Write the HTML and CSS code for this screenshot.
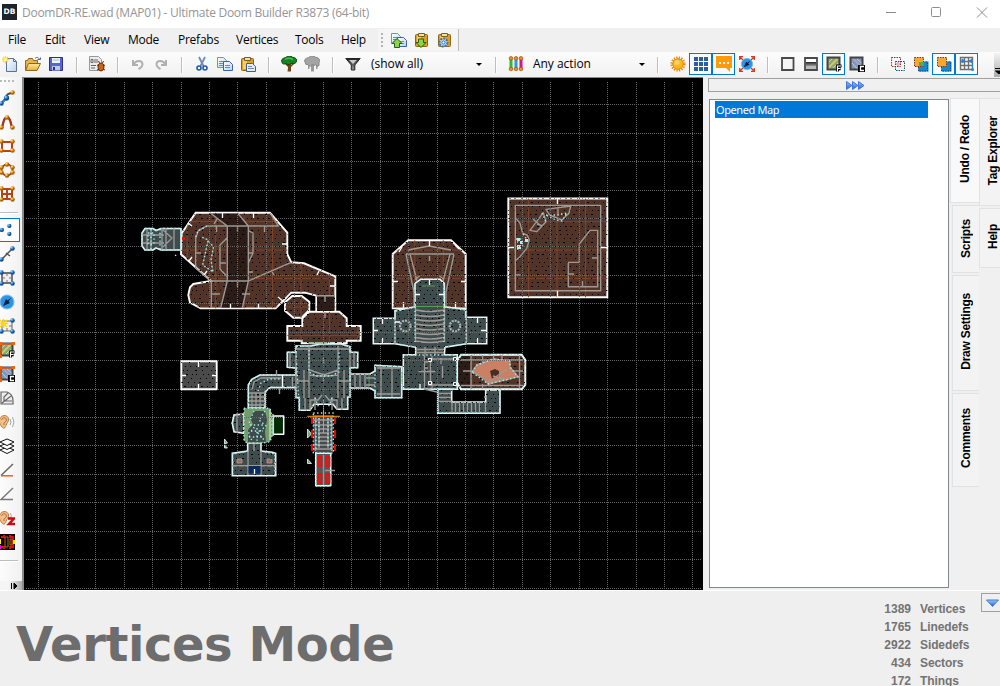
FILE: index.html
```html
<!DOCTYPE html>
<html lang="en">
<head>
<meta charset="utf-8">
<title>Ultimate Doom Builder</title>
<link rel="stylesheet" href="styles.css">
</head>
<body>
<svg class="defs" width="0" height="0">
  <defs>
    <radialGradient id="gOrange" cx=".35" cy=".3"><stop offset="0" stop-color="#ffe9a0"/><stop offset=".5" stop-color="#f59c1a"/><stop offset="1" stop-color="#a85a00"/></radialGradient>
    <radialGradient id="gBlue" cx=".35" cy=".3"><stop offset="0" stop-color="#b5dcff"/><stop offset=".5" stop-color="#3a8ad8"/><stop offset="1" stop-color="#0d4a90"/></radialGradient>
    <linearGradient id="gFold" x2="0" y2="1"><stop offset="0" stop-color="#ffe9a0"/><stop offset="1" stop-color="#e6ae35"/></linearGradient>
    <linearGradient id="gPage" x2="1" y2="1"><stop offset="0" stop-color="#fff"/><stop offset="1" stop-color="#b9d3ee"/></linearGradient>
    <linearGradient id="gArrow" x2="0" y2="1"><stop offset="0" stop-color="#9dc8f8"/><stop offset="1" stop-color="#1f5fc8"/></linearGradient>
    <linearGradient id="gDark" x2="0" y2="1"><stop offset="0" stop-color="#222"/><stop offset="1" stop-color="#999"/></linearGradient>
    <symbol id="ob" viewBox="0 0 6 6"><circle cx="3" cy="3" r="2.700" fill="url(#gOrange)"/></symbol>
    <symbol id="bb" viewBox="0 0 6 6"><circle cx="3" cy="3" r="2.700" fill="url(#gBlue)"/></symbol>
    <symbol id="clip" viewBox="0 0 16 16"><rect x="1.500" y="2.500" width="12" height="12" rx="1" fill="#d9a02c" stroke="#8e6414"/><path d="M3 4h4v9H3z" fill="#f3cd6c"/><path d="M4.500 1.500h6v3h-6z" fill="#f1dfa8" stroke="#79601f"/></symbol>
    <symbol id="pages" viewBox="0 0 16 16"><path d="M.5 1.500h6l3 3v7h-9z" fill="url(#gPage)" stroke="#6f91bd"/><path d="M2 5.500h5M2 7.500h5M2 9.500h4" stroke="#5b8fd0"/><path d="M6.500 5.500h6l3 3v6h-9z" fill="url(#gPage)" stroke="#3c64a4"/><path d="M8 9.500h5M8 11.500h5" stroke="#5b8fd0"/></symbol>
    <symbol id="tex" viewBox="0 0 16 16"><path d="M1.500 1.500h12v12h-12z" fill="#90a66c" stroke="#444" stroke-width="2"/><path d="M3 10l7-7h2.500L3 12.500z" fill="#d7c874"/><path d="M3 6l3-3M7 12l5-5" stroke="#bcd3bd"/></symbol>
    <symbol id="texc" viewBox="0 0 16 16"><path d="M1.500 1.500h12v12h-12z" fill="#7f98ba" stroke="#444" stroke-width="2"/><path d="M3 3h3l7 7v2.500z" fill="#b2a1c2"/><path d="M3 7l5 5.500M8 3l4.500 4" stroke="#b6d2e8"/></symbol>
    <symbol id="lf" viewBox="0 0 7 8"><path d="M2.500 7.500v-5.500h4M2.500 4.500h3" fill="none" stroke="#000" stroke-width="3"/><path d="M2.500 7.500v-6M2 2h4M2.500 4.500h3" fill="none" stroke="#fff" stroke-width="1.200"/></symbol>
    <symbol id="lc" viewBox="0 0 7 8"><path d="M0 1h7v7H0z"/><path d="M6 2.500H2.500v4H6" fill="none" stroke="#fff" stroke-width="1.300"/></symbol>
    <symbol id="compass" viewBox="0 0 16 16"><circle cx="8" cy="8" r="7" fill="#2b96e8" stroke="#82b9e8"/><path d="M12.500 3.500L8.500 6.500 7 5 4 12l7-3-1.500-1.500z" fill="#061d38"/></symbol>
    <symbol id="ear" viewBox="0 0 16 16"><path d="M3 13C1 10-1 7 1.500 3.500 4 .5 9 1 9.500 5c.3 3-2 4-2.500 6.500S4.500 15 3 13z" fill="#f3c08a" stroke="#b77b43"/><path d="M2.500 6C3.500 3 7.500 3 7.300 6S4.500 7 5 11" fill="none" stroke="#a96a35"/></symbol>
    <pattern id="dots" width="28" height="28" patternUnits="userSpaceOnUse" patternTransform="translate(10 19)">
      <path d="M1 3.500h1m4 0h2m5 0h1m3 0h1m5 0h2M3 7.500h1m7 0h1m9 0h1M0 11.500h2m5 0h1m4 0h1m5 0h1m4 0h2M5 15.500h1m3 0h1m7 0h2m5 0h1M2 19.500h1m5 0h2m4 0h1m3 0h1m6 0h1M0 23.500h1m5 0h1m6 0h1m8 0h1M3 27.500h2m5 0h1m5 0h1m4 0h2" stroke="#000" shape-rendering="crispEdges"/>
    </pattern>
    <pattern id="seams" width="28.450" height="28.450" patternUnits="userSpaceOnUse" patternTransform="translate(16 22)"><path d="M.5 0v29M0 .5h29" stroke="#7c452c" fill="none"/></pattern>
    <g id="rockShapes">
      <path d="M195.700 212.700H270L287.300 232.700V254L291.300 262.300 304 263.300 335.300 276.300V311H316.300V295.700L305 292.700H291.300L275.700 308.300H200.700L190 302.700 188.300 295 190 287.300 193.300 284 211 281 181 254.300 181.700 233.300z"/>
      <path d="M292.300 296h9.400l7.600 5.700v8.300l-7.600 7.700h-8.400L285 310.700v-8.400z"/>
      <path d="M302.300 318.300l7-6.600h30l7.400 6.600v7.700h14v14.700h-14v2.600h-45v-2.600h-14.400V326h15z"/>
      <path d="M408.300 240.300H451L465.700 254v54.300h-73V254z"/>
      <path d="M508.300 198.500h99v98.800h-99z"/>
      <path d="M461 354.700h60.700l3.600 5.300v25l-3.600 4.300H461l-4.300-7.600v-20z"/>
    </g>
    <g id="steelShapes">
      <path d="M420.700 279.300H440L444.300 283.300V306.700L465.700 309.300V317.300H486.700V343.700H466.700L445 347.300 444.300 354.700H457.300V389.300H403.300V354.700H415.700V347.300L395 343.700H373.300V318.300H395V310.700L415 306.700V283.300z"/>
      <path d="M437.700 389.300h14V402h34V390H500v23.300h-62.300z"/>
      <path d="M350 374h20l5-3v-5.700l26.700 1.400v31H375V391l-5-3h-20z"/>
      <path d="M296 346l14 0 11-2h20l9 2.700v5.600h7.700v15.400H350V397.300h-2.300v12H337l-4-5h-19l-4 6H299.300v-12.700H296v-10H270l-5 4.400v16H248.300V385l3.400-5.700L260 375h36v-7l-8.700-.7v-15H296z"/>
      <path d="M244 414l-10 1-1.700 8.300L234 431.700l10 1.600z"/>
      <path d="M247.700 443H261V451l11.300 1.300 3.400 1V475.700H232.300V453.300L247.700 451z"/>
    </g>
  </defs>
</svg>

<header class="titlebar">
  <span class="logo">DB</span>
  <span class="title">DoomDR-RE.wad (MAP01) - Ultimate Doom Builder R3873 (64-bit)</span>
  <svg class="winbtns" width="110" height="20" viewBox="0 0 110 20" fill="none" stroke="#8d8d8d"><path d="M6 10.500h10"/><rect x="51.500" y="5.500" width="9" height="9" rx="1"/><path d="M97 5.500l10 10M107 5.500l-10 10"/></svg>
</header>

<nav class="menubar">
  <span class="m1">File</span><span class="m2">Edit</span><span class="m3">View</span><span class="m4">Mode</span><span class="m5">Prefabs</span><span class="m6">Vertices</span><span class="m7">Tools</span><span class="m8">Help</span>
  <div class="strip">
    <i class="grip"></i>
    <svg viewBox="0 0 16 16"><use href="#pages"/><path d="M6 6.500l5 5H8.500v4h-5v-4H1z" fill="#8ed34a" stroke="#24600f"/></svg>
    <svg viewBox="0 0 16 16"><use href="#clip"/><path d="M7 15.500l-5-5h2.500V7h5v3.500H12z" fill="#8ed34a" stroke="#24600f"/></svg>
    <svg viewBox="0 0 16 16"><use href="#clip"/><circle cx="6.500" cy="10.500" r="4" fill="#b8d4ef" stroke="#3f74ad" stroke-width="2" stroke-dasharray="2 1"/><circle cx="6.500" cy="10.500" r="1.500" fill="#fff" stroke="#3f74ad"/></svg>
  </div>
</nav>

<div class="toolbar">
  <b><svg viewBox="0 0 16 16"><path d="M4.500 2.500h7l3 3v10h-10z" fill="url(#gPage)" stroke="#5c7390"/><path d="M11.500 2.500v3h3" fill="none" stroke="#5c7390"/><path d="M3.500 0v8M0 3.500h8M1 1l5 5M6 1L1 6" stroke="#ffe11c" stroke-width="1.300"/><circle cx="3.500" cy="3.500" r="1.500" fill="#fff7a0"/></svg></b>
  <b><svg viewBox="0 0 16 16"><path d="M.5 14V4.500h2l1-2h4l1 2h4v4" fill="#e7b64d" stroke="#8d681c"/><path d="M.5 14.500l3-7h12l-3.500 7z" fill="url(#gFold)" stroke="#8d681c"/><path d="M10 2.500c2-2 4-1 4.500 1.500M12.500 3.500h3v-2" fill="none" stroke="#4d6688"/></svg></b>
  <b><svg viewBox="0 0 16 16"><path d="M1.500 1.500h13v13h-13z" fill="#5964d0" stroke="#29308b"/><path d="M4 2h8v5H4z" fill="#eef4ff"/><path d="M4 10h8v4.500H4z" fill="#c0c8dd"/><path d="M5 11h2v3H5z" fill="#29308b"/><path d="M5 4h6" stroke="#a3b8df"/></svg></b>
  <i class="sep"></i>
  <b><svg viewBox="0 0 16 16"><path d="M.5.5h9l3 3v11H.5z" fill="#ececec" stroke="#999"/><path d="M2 3.500h2v3H2zM6 3v4M8 3v4M2 9.500h5M2 12h4" fill="none" stroke="#666"/><ellipse cx="12" cy="11" rx="3" ry="4" fill="#cc6418" stroke="#713006"/><path d="M8 9l2 1m-2 4l2-1m6-4l-2 1m2 4l-2-1M10.500 7l-1-2m4 2l1-2" stroke="#4b321d"/></svg></b>
  <i class="sep"></i>
  <b><svg viewBox="0 0 16 16"><path d="M3 4v5h5M3.500 8.500C6 4 12 4 12.500 8c0 3-2 4-4 5" fill="none" stroke="#b0b0b0" stroke-width="2"/></svg></b>
  <b><svg viewBox="0 0 16 16"><path d="M13 4v5H8M12.500 8.500C10 4 4 4 3.500 8c0 3 2 4 4 5" fill="none" stroke="#b0b0b0" stroke-width="2"/></svg></b>
  <i class="sep"></i>
  <b><svg viewBox="0 0 16 16"><path d="M5 1l4.500 9M11 1L6.500 10" stroke="#6c8db7" stroke-width="1.800"/><g fill="none" stroke="#2258b0" stroke-width="1.600"><circle cx="5" cy="12" r="2"/><circle cx="11" cy="12" r="2"/></g></svg></b>
  <b><svg viewBox="0 0 16 16"><use href="#pages"/></svg></b>
  <b><svg viewBox="0 0 16 16"><use href="#clip"/><path d="M6.500 7.500h6l3 3v5h-9z" fill="#e2ebf5" stroke="#445d83"/><path d="M8 10.500h4M8 12.500h6" stroke="#6e8bb8"/></svg></b>
  <i class="sep"></i>
  <b><svg viewBox="0 0 16 16"><path d="M7 7h3v8.500H6.500L7 12z" fill="#704318"/><path d="M8 11L4 7m5 4l4-4" stroke="#704318" stroke-width="1.500"/><path d="M1 6C-.5 3 3 2 4.500 1.500 7-.5 11 0 12 1.500c3 0 5 3 3 5-2 2-4 1-5 1-2 2-4 1-5 0C3 8.500 1 8 1 6z" fill="#138521" stroke="#07460f"/><path d="M4 3.500c3-2 6-1 8 0" fill="none" stroke="#55b84a" stroke-width="1.500"/></svg></b>
  <b><svg viewBox="0 0 16 16"><path d="M7 7h3v8.500H7zM4 9h1.500v4H4zM12 9h1.500v4H12z" fill="#999"/><path d="M1 6C-.5 3 3 2 4.500 1.500 7-.5 11 0 12 1.500c3 0 5 3 3 5v3l-2 1-1-2-2 1-2-1-2 2-2-2-2 0z" fill="#a4a4a4" stroke="#858585"/></svg></b>
  <i class="sep"></i>
  <b><svg viewBox="0 0 16 16"><path d="M.8 2.500h14.400L9.800 9v5H6.300V9z" fill="url(#gDark)" stroke="#222"/><path d="M4 4h8L8 8z" fill="#c9c9c9"/></svg></b>
  <div class="combo c1"><span>(show all)</span><i class="caret"></i></div>
  <i class="sep"></i>
  <b><svg viewBox="0 0 16 16"><path d="M3 3v10" stroke="#2fbb2f" stroke-width="3"/><path d="M8 3v10" stroke="#2b9be0" stroke-width="3"/><path d="M13 3v10" stroke="#d3138f" stroke-width="3"/><g fill="#e79426" stroke="#9b520b" stroke-width=".7"><circle cx="3" cy="2.300" r="1.800"/><circle cx="8" cy="2.300" r="1.800"/><circle cx="13" cy="2.300" r="1.800"/><circle cx="3" cy="13" r="1.800"/><circle cx="8" cy="13" r="1.800"/><circle cx="13" cy="13" r="1.800"/></g></svg></b>
  <div class="combo c2"><span>Any action</span><i class="caret"></i></div>
  <i class="sep"></i>
  <b><svg viewBox="0 0 16 16"><circle cx="8" cy="8" r="6.300" fill="none" stroke="#d98c1c" stroke-width="2.600" stroke-dasharray="1.300 1.170"/><circle cx="8" cy="8" r="5.200" fill="#fcb71c" stroke="#e28a0c"/><circle cx="7" cy="6.500" r="2.500" fill="#ffd65a"/></svg></b>
  <b class="on"><svg viewBox="0 0 16 16" fill="#2b5e9b" shape-rendering="crispEdges"><path d="M1 1h4v4H1zM6 1h4v4H6zM11 1h4v4h-4zM1 6h4v4H1zM6 6h4v4H6zM11 6h4v4h-4zM1 11h4v4H1zM6 11h4v4H6zM11 11h4v4h-4z"/></svg></b>
  <b class="on"><svg viewBox="0 0 16 16"><path d="M0 0h16v12h-2v4l-4-4H0z" fill="#ff9b05"/><path d="M3 6h2v2H3zM7 6h2v2H7zM11 6h2v2h-2z" fill="#fff"/></svg></b>
  <b><svg viewBox="0 0 16 16"><g fill="none" stroke="#d33a1e" stroke-width="1.300"><path d="M.7 4V.7H4M1 1l3 3M12 .7h3.300V4M15 1l-3 3M.7 12v3.300H4M1 15l3-3M12 15.300h3.300V12M15 15l-3-3"/></g><use href="#compass" x="1.500" y="1.500" width="13" height="13"/></svg></b>
  <i class="sep"></i>
  <b><svg viewBox="0 0 16 16"><path d="M2 2h11.500v12H2z" fill="#f5f5f5" stroke="#4a4a4a" stroke-width="1.800"/></svg></b>
  <b><svg viewBox="0 0 16 16"><path d="M2 2h12v12H2z" fill="#fff" stroke="#4a4a4a" stroke-width="1.800"/><path d="M3 6h10v4H3z" fill="url(#gDark)"/><path d="M3 10h10v3H3z" fill="#bbb"/></svg></b>
  <b class="on"><svg viewBox="0 0 16 16"><use href="#tex"/><use href="#lf" x="9" y="8" width="7" height="8"/></svg></b>
  <b><svg viewBox="0 0 16 16"><use href="#texc"/><use href="#lc" x="9" y="8" width="7" height="8"/></svg></b>
  <i class="sep"></i>
  <b><svg viewBox="0 0 16 16" fill="none" stroke-dasharray="1.500 1"><path d="M1.500 1.500h9v9h-9z" stroke="#a52a2a"/><path d="M5.500 5.500h9v9h-9z" stroke="#244a70"/><path d="M6 8h5M8 6v5" stroke="#888"/></svg></b>
  <b><svg viewBox="0 0 16 16"><path d="M5.500 5.500h10v10h-10z" fill="#1789d0"/><path d="M1.500 1.500h9v9h-9z" fill="#f2a92e" stroke="#7b3a1c" stroke-dasharray="1.500 1"/><path d="M6 6h5v4H6z" fill="#4cae46"/><path d="M5.500 11v4h9v-9h-3" fill="none" stroke="#124c7c" stroke-dasharray="1.500 1"/></svg></b>
  <b class="on"><svg viewBox="0 0 16 16"><path d="M5.500 5.500h10v10h-10z" fill="#1789d0"/><path d="M1.500 1.500h9v9h-9z" fill="#f2a92e" stroke="#7b3a1c" stroke-dasharray="1.500 1"/><path d="M5.500 11v4h9v-9h-3" fill="none" stroke="#124c7c" stroke-dasharray="1.500 1"/></svg></b>
  <b class="on"><svg viewBox="0 0 16 16"><path d="M1.500 1.500h12v12h-12zM5.500 1v13M9.500 1v13M1 5.500h13M1 9.500h13" fill="none" stroke="#6e6e6e" stroke-width="1.400"/><path d="M3 3l3 2-3 2zM13 3l-3 2 3 2zM13.500 8v5" fill="#2b83d4" stroke="#2b83d4"/><circle cx="13.500" cy="13.500" r="1.500" fill="#2b83d4"/></svg></b>
  <i class="more"><svg width="8" height="8" viewBox="0 0 8 8"><path d="M1 1.500h7M1.500 4h6L5 7z" stroke="#000"/></svg></i>
</div>

<main class="work">
  <aside class="tools">
    <i class="hgrip"></i>
    <b><svg viewBox="0 0 16 16"><path d="M2 13Q6 11 7 7T14 3" fill="none" stroke="#4c4c4c" stroke-width="2"/><path d="M2 13l5-5" stroke="#3991dc" stroke-width="1.800"/><use href="#bb" x="0" y="11" width="5" height="5"/><use href="#bb" x="4.500" y="5" width="6" height="6"/><use href="#ob" x="11" y="0" width="5" height="5"/></svg></b>
    <b><svg viewBox="0 0 16 16"><path d="M3 14Q5 3 8 3t5 11" fill="none" stroke="#a7331c" stroke-width="2.400"/><use href="#ob" x="0" y="11" width="5" height="5"/><use href="#ob" x="5.500" y="1" width="5" height="5"/><use href="#ob" x="11" y="11" width="5" height="5"/></svg></b>
    <b><svg viewBox="0 0 16 16"><path d="M3 4h10v9H3z" fill="none" stroke="#b54416" stroke-width="2"/><use href="#ob" y="1" width="5" height="5"/><use href="#ob" x="11" y="1" width="5" height="5"/><use href="#ob" y="10" width="5" height="5"/><use href="#ob" x="11" y="10" width="5" height="5"/></svg></b>
    <b><svg viewBox="0 0 16 16"><circle cx="8" cy="8" r="5.500" fill="none" stroke="#b54416" stroke-width="1.800"/><use href="#ob" x="5.500" width="5" height="5"/><use href="#ob" x="5.500" y="11" width="5" height="5"/><use href="#ob" y="3" width="5" height="5"/><use href="#ob" y="8" width="5" height="5"/><use href="#ob" x="11" y="3" width="5" height="5"/><use href="#ob" x="11" y="8" width="5" height="5"/></svg></b>
    <b><svg viewBox="0 0 16 16"><path d="M3 3h10v10H3zM8 3v10M3 8h10" fill="none" stroke="#b54416" stroke-width="2"/><use href="#ob" width="5" height="5"/><use href="#ob" x="11" width="5" height="5"/><use href="#ob" y="11" width="5" height="5"/><use href="#ob" x="11" y="11" width="5" height="5"/></svg></b>
    <i class="hsep"></i>
    <b class="on"><svg viewBox="0 0 16 16"><use href="#bb" x="8" y="1.500" width="4.800" height="4.800"/><use href="#bb" x=".5" y="5.500" width="4.800" height="4.800"/><use href="#bb" x="8" y="9.500" width="4.800" height="4.800"/></svg></b>
    <b><svg viewBox="0 0 16 16"><path d="M3 13L13 3M7 7l4 3" stroke="#555" stroke-width="1.500"/><use href="#bb" x="0" y="11" width="5" height="5"/><use href="#bb" x="11" y="0" width="5" height="5"/></svg></b>
    <b><svg viewBox="0 0 16 16"><path d="M3 3h10v10H3z" fill="#eee" stroke="#444" stroke-width="1.400"/><path d="M8 3v3m0 4v3M3 8h3m4 0h3" stroke="#777"/><use href="#bb" width="5" height="5"/><use href="#bb" x="11" width="5" height="5"/><use href="#bb" y="11" width="5" height="5"/><use href="#bb" x="11" y="11" width="5" height="5"/></svg></b>
    <b><svg viewBox="0 0 16 16"><use href="#compass"/></svg></b>
    <b><svg viewBox="0 0 16 16"><path d="M3 3h10v10H3z" fill="#eee" stroke="#666"/><path d="M8 10v3m2-5h3" stroke="#777"/><path d="M4.500 1v9M0 5.500h9M1 2l7 7M8 2L1 9" stroke="#ffd90a" stroke-width="1.500"/><use href="#bb" x="11" width="5" height="5"/><use href="#bb" y="11" width="5" height="5"/><use href="#bb" x="11" y="11" width="5" height="5"/></svg></b>
    <b><svg viewBox="0 0 16 16"><use href="#tex"/><path d="M1 14V2h14" fill="none" stroke="#e5661a" stroke-width="1.500"/><path d="M0 0h3v3H0zM13 0h3v3h-3zM0 13h3v3H0z" fill="#ea6514"/><use href="#lf" x="9" y="8" width="7" height="8"/></svg></b>
    <b><svg viewBox="0 0 16 16"><use href="#texc"/><path d="M1 14V2h14" fill="none" stroke="#e5661a" stroke-width="1.500"/><path d="M0 0h3v3H0zM13 0h3v3h-3zM0 13h3v3H0z" fill="#ea6514"/><use href="#lc" x="9" y="8" width="7" height="8"/></svg></b>
    <b><svg viewBox="0 0 16 16" fill="#eee" stroke="#666" stroke-width="1.200"><path d="M2 2h6q6 2 6 9v3H2zM5 11V7l4-4M3 13l9-7M5 11h8"/></svg></b>
    <b><svg viewBox="0 0 16 16"><use href="#ear"/><path d="M11 5q2 3 0 6M13.500 3q3 5 0 10" fill="none" stroke="#a0a8a8"/></svg></b>
    <b><svg viewBox="0 0 16 16" fill="#fff" stroke="#111"><path d="M1 12l7-3 7 3-7 3.500z"/><path d="M1 8l7-3 7 3-7 3.500z"/><path d="M1 4l7-3 7 3-7 3.500z"/></svg></b>
    <b><svg viewBox="0 0 16 16" fill="none" stroke-width="1.500"><path d="M14 2L2 13.500" stroke="#666"/><path d="M2 13.800h12" stroke="#e5661a"/></svg></b>
    <b><svg viewBox="0 0 16 16" fill="none" stroke="#777" stroke-width="1.400"><path d="M14 2L2 13.500h12"/></svg></b>
    <b><svg viewBox="0 0 16 16"><use href="#ear"/><path d="M11 3q3 3 0 5" fill="none" stroke="#a0a8a8"/><path d="M9 8.500h6l-5 5.500h6" fill="none" stroke="#c40d16" stroke-width="2.500"/></svg></b>
    <b><svg viewBox="0 0 16 16"><path d="M0 0h16v16H0z" fill="#100"/><path d="M2 3h3V1m6 0v2h3v10h-3v2m-6 0v-2H2" fill="none" stroke="#f00808" stroke-width="1.800"/><path d="M6 3v10h3V3zM11 5v6h2V5z" fill="none" stroke="#a36931"/><path d="M0 5h2v5H0zM14 6h2v4h-2z" fill="#f4ee12"/><path d="M0 11h2v4H0z" fill="#d913d9"/></svg></b>
    <i class="hsep"></i>
    <i class="tmore"><svg width="8" height="8" viewBox="0 0 8 8"><path d="M1.500 1v6M4 1v6l3-3z" stroke="#000"/></svg></i>
  </aside>

  <svg class="map" viewBox="24 78 679 512">
    <path class="grid" d="M38.500 82V590M67.500 82V590M95.500 82V590M124.500 82V590M152.500 82V590M181.500 82V590M209.500 82V590M237.500 82V590M266.500 82V590M294.500 82V590M323.500 82V590M351.500 82V590M380.500 82V590M408.500 82V590M437.500 82V590M465.500 82V590M493.500 82V590M522.500 82V590M550.500 82V590M579.500 82V590M607.500 82V590M636.500 82V590M664.500 82V590M692.500 82V590M26 104.500H701M26 133.500H701M26 161.500H701M26 190.500H701M26 218.500H701M26 246.500H701M26 275.500H701M26 303.500H701M26 332.500H701M26 360.500H701M26 389.500H701M26 417.500H701M26 445.500H701M26 474.500H701M26 502.500H701M26 531.500H701M26 559.500H701M26 588.500H701"/>

    <!-- floors: brown rock, then steel, with their textures -->
    <use href="#rockShapes" class="rock"/>
    <use href="#rockShapes" class="seams"/>
    <path class="shade" d="M210 213.500H237.300L248.300 226V281L242.300 307.500H220.700L227.300 281V226zM317 296.500h17.500v14.500H317zM462 356h9v32h-9l-4-7v-18z"/>
    <use href="#rockShapes" class="grain"/>
    <use href="#steelShapes" class="steel"/>
    <path class="steel" d="M145 228.500h8l3 2 5-2h20v21.500h-20l-5-2-3 2h-8l-3-4v-13z"/>
    <use href="#steelShapes" class="grain"/>
    <path d="M181.300 361.300h35.400v28h-35.400z" class="slab"/>
    <path d="M181.300 361.300h35.400v28h-35.400z" class="grain"/>

    <path class="wall" d="M206.700 226H278.300L270 213M206.700 226L198.300 230.700 195.700 238V268L211 281H248.300L291.300 262.300M211.300 281V308M210 212.700L227.300 226V281L220.700 308M237.300 212.700L248.300 226V281L242.300 308M248.300 230.700L253 233V253L248.300 263M227.300 237.700L220 245V269L227.300 276.700M217 219l-3 5M237.500 226v6M216.500 226v6M264.500 226v6M237.500 281v6M271 270l3 5M196 253h5M220 263h6M212 294h8M242 294h8M248 253h5M248 272h5M316 295.700h19M325 312v6M325 296v6"/>
    <path class="faint" d="M202.300 237.300L208.300 240 206 250 202.700 265 210 270 213 272 211 260 213.500 247 208 240"/>
    <path class="vtx" d="M202.300 237.300L208.300 240 206 250 202.700 265 210 270 213 272 211 260 213.500 247 208 240M207 226l-9 5-3 8"/>
    <path class="tick" d="M222.500 213v5M253.500 213v5M188 223l4 3M189 261l3-4M207 271l-3 4M287 244h-5M230.500 308v-5M258.500 308v-5M317 275l2-4M335 286h-5M278 297l6 5"/>

    <!-- west machine -->
    <path class="wall" d="M147 229v20M151 229v20M162 228v22M166 228v22M174 228v22M142 235h22M142 243h22M163 230l9 8-9 9"/>
    <path class="vtx" d="M145 228.500h8l3 2 5-2h20v21.500h-20l-5-2-3 2h-8l-3-4v-13zM148 233h6v11h-6zM175 255l3 2M151 229v20M160 229v21"/>
    <path d="M182 237h3v3h-3z" fill="#f00"/>

    <!-- arena -->
    <path class="wall" d="M515.300 205.300h85.400v85.400h-85.400zM568.300 262.300h11V244L590 230.300h7.700v56.400h-29.400zM515.300 217.300L520 223.300 522.700 233.300 527 235 529.300 240 526.700 248.300 520 256.700 515.300 260.700M530 230.300L543.300 212.700 546 221.700 536.700 231.700zM533 219l8 7M546 209.300L570.700 206 569 213 562 220 552 216 549 214zM558 207v8M537 224l6 2M582.500 281v5M592 258h5M516 275h5M569 274h5"/>
    <path class="vtx" d="M546 215L558 215 567 213 562 221 556 220zM516 239h7M517 242h8M518 246h7M517 249h4M523 234l5 7M561 214h8M542 213l4 9"/>
    <path d="M517 238h3v3h-3zM520 241h3v3h-3zM517 245h4v4h-4zM525 239h3v3h-3z" fill="#aff4f4"/>
    <path class="tick" d="M557.500 198v6M557.500 297v-6M508 247.500h6M607 247.500h-6"/>

    <!-- north hall -->
    <path class="wall" d="M406 254h48M408 250l21-4 22 4M406 254l8 38v14M410 254l7 27M454 254l-8 38v14M450 254l-7 27M429.500 256v5M415 279.500l5-4M444 279.500l-5-4"/>
    <path class="green" d="M415 306.500h29M422 286h14M308 343h20M402 372v12M369 374v14M311 400v8"/>
    <path class="wall" d="M415.500 308v34M444.500 308v34M416 310q14 3 28 0M416 315q14 3 28 0M416 319.500q14 3 28 0M416 324q14 3 28 0M416 328.500q14 3 28 0M416 333q14 3 28 0M416 337.500q14 3 28 0M416 341q14 3 28 0M395 318v26M466.500 311v33M416 349.500h28M416 352.500h28M425 347v8M435 347v8"/>
    <g class="ring"><circle cx="405.300" cy="326" r="5.300"/><circle cx="455" cy="326" r="5.300"/></g>
    <path class="vtx" d="M395 310.700v33L415 347M466 311v33l-21 3M415 284v58M444 284v58M403.500 355h53M403.500 389h53M396 311l20-4M465 310l-20-3"/>
    <path class="tick" d="M429.500 240v6M402 247l-3 5M459 249l-4-4M393 281.500h5M466 281.500h-5M403.500 308v-6M455.500 308v-6M429.500 280v5M415 294.500h5M444 294.500h-5M382.500 319v5M382.500 343v-5M374 330.500h4M477.500 318v5M477.500 343v-5M486 330.500h-5M395 322h5M420 389v-5"/>
    <path class="wall" d="M424.500 355v34M430.500 358v28M428 359h28M428 385h28M432 356v5M432 382v6M424 362h4M424 368h4M418.500 371.500h17M442.500 366v12M441 364v-6M438 393.500h13M438 397.500h13M438 401.500h14M452 402v11M455.500 402v11M459.500 402v11M463.500 402v11M467.500 402v11M471.500 402v11M475.500 402v11M479.500 402v11M485.500 402v11M424 389l13 3M487 397h-3"/>
    <path class="box" d="M428.500 358.500h3v3h-3zM428.500 381.500h3v3h-3zM453.500 357.500h3v3h-3zM453.500 382.500h3v3h-3z"/>

    <!-- lava room -->
    <path d="M472.300 371.700L476.700 365 493.300 359 510 360.700V367.300L518.300 376.700 488.300 384 483.300 378.300z" fill="#c98064"/>
    <path d="M490 371l5-2 4 2v5l-7 3z" fill="#4a2d22"/>
    <path class="wall" d="M472.300 371.700L476.700 365 493.300 359 510 360.700V367.300L518.300 376.700 488.300 384 483.300 378.300zM471 355v34M482.500 355v9M482.500 384v5M493.500 355v6M502 355v6M519.500 355v34M461 360h62M461 385.500h62M487 383l20-14M493 376l14 4M513 371h10M463 371h8"/>
    <path class="vtx" d="M461 354.700h60.700l3.600 5.300v25l-3.600 4.300H461l-4.300-7.600v-20zM472 372l5-7 16-6 17 2v6l8 10-30 7zM438 390v23h62v-23"/>

    <!-- central hub -->
    <path class="wall" d="M296 352v46M350 352v46M309 346v52M338 346v52M304 370v28M344 370v28M309 375q14 2 29 0M310 370l14 5 14-5M296 349h54M290 352v15M354 352v15M296 381h13M338 381h12M305 398v12M342 398v12M310 410v-10h8l4-5M337 410v-10h-8l-4-5M315 397v13M332 397v13M323.500 358v6M323.500 373v8M276.500 370v6M282.500 377v10M292.500 377v10M355 374v14M360 374v14M365 374v14M381 366v31M392 366v31M377 368h23M377 394h23M366 378h9M366 385h9M249 393h16M249 397h16M249 401h16M249 405h16M252 393v14M256 393v14M260 393v14M252 390l2-8 7-4h20M279.500 388v6"/>
    <path class="vtx" d="M296 346l14 0 11-2h20l9 2.700v5.600h7.700v15.400H350V397.300h-2.300v12M299.300 410v-12.700H296v-10H270l-5 4.400v16H248.300V385l3.400-5.700L260 375h36v-7l-8.700-.7v-15H296zM309 350v22l7 4h15l8-4v-22M258 391l3-8 8-4h14M375 365.300l26.700 1.400v31H375zM315 398l4 10M332 398l-4 10"/>
    <path class="tick" d="M198.500 361v6M198.500 389v-5M181 375.500h5M217 375.500h-5M282.500 375v12"/>

    <!-- garden and south-west -->
    <path d="M244 408.300h26l2 8v20l-2 5.400-8 1.500H247l-3-3z" fill="#759c6b"/>
    <path d="M254 411h11l2 9-2 12 1 10H248v-12l5-6-3-6z" fill="#3d4c4b"/>
    <path d="M273.300 416h10.400v18.300h-10.400z" fill="#002b02" stroke="#fff" stroke-width="1.500"/>
    <path class="pale" d="M270 410v30M273 414v22"/>
    <path class="vtx" d="M244 408.300h26l2 8v20l-2 5.400-8 1.500H247l-3-3zM254 411l-5 12 5 5-6 6 5 8M265 411l-6 9 7 6-8 7 7 8M250 425h15M251 431h12M249 437h15M257 428v14M234 415l-2 8 2 9M247.700 451l-15 3v21M261 451l14 3v21"/>
    <path class="wall" d="M232.300 465.700h43.400M248 451v24M261 451v24M237 413v20M254 444v7"/>
    <path d="M248.500 466h12v7.500h-12z" fill="#082b63"/><path d="M237 459h5v4h-5zM267 459h5v4h-5z" fill="#9c6c5c" stroke="#bca69d" stroke-width=".7"/>
    <path class="tick" d="M254.500 474v-5"/>
    <path d="M224.500 439l3 4-3 1zM224.500 445l3 3h-3zM307.500 429l4 5-4 4zM307.500 459l4 4.500h-4z" fill="#79a978" stroke="#e8fff4" stroke-width=".8"/>

    <!-- train -->
    <path d="M313.300 415h20v37h-20z" fill="#454b50"/><path d="M315.700 453.300h15v32.400h-15z" fill="#55595b" stroke="#fff" stroke-width="1.500"/>
    <path class="wall" d="M315.500 417v34M331.500 417v34M313 420h20M313 425h20M318 429h11M318 433h11M318 437h11M318 441h11M313 445h20M313 449h20M319 418v30M328 418v30M323.500 455v30M325 470.500h10"/>
    <path class="vtx" d="M313.300 413h20v40h-20zM316 417v34M331 417v34M319 418v30M328 418v30M315.700 452v34h15v-34"/>
    <path class="red" d="M315 416.500h17M312 417v7M335 417v7M312 430v8M335 430v8M312 444v7M335 444v7M318.500 457h3v9h-3zM326.500 457h3v9h-3zM318.500 474h3v9h-3zM326.500 474h3v9h-3z"/>
    <path d="M307.300 416.300H340M323.500 400v33" stroke="#f69a0c" fill="none"/>
    <path class="grid over" d="M209.500 213V308M237.500 213V308M266.500 213V308M294.500 263V318M323.500 311V410M408.500 241V389M437.500 241V413M522.500 198V297M550.500 198V297M579.500 198V297M182 246.500H287M190 275.500H330M393 275.500H465M508 218.500H607M508 246.500H607M508 275.500H607M190 303.500H310M393 303.500H465M288 332.500H487M288 360.500H520M250 389.500H350M234 417.500H284"/>
  </svg>

  <section class="side">
    <div class="collapse"><svg width="19" height="9" viewBox="0 0 19 9"><path d="M.5.5L6 4.500.5 8.500zM6.500.5L12 4.500 6.500 8.500zM12.500.5L18 4.500 12.500 8.500z" fill="url(#gArrow)" stroke="#3f78d8"/></svg></div>
    <div class="dock">
      <div class="list"><div class="row">Opened Map</div></div>
      <div class="tabs t1">
        <div class="tab undo"><span>Undo / Redo</span></div>
        <div class="tab scripts"><span>Scripts</span></div>
        <div class="tab draw"><span>Draw Settings</span></div>
        <div class="tab comments"><span>Comments</span></div>
      </div>
      <div class="tabs t2">
        <div class="tab tag"><span>Tag Explorer</span></div>
        <div class="tab help"><span>Help</span></div>
      </div>
    </div>
  </section>
</main>

<footer class="status">
  <h1>Vertices Mode</h1>
  <dl class="stats">
    <dt>1389</dt><dd>Vertices</dd>
    <dt>1765</dt><dd>Linedefs</dd>
    <dt>2922</dt><dd>Sidedefs</dd>
    <dt>434</dt><dd>Sectors</dd>
    <dt>172</dt><dd>Things</dd>
  </dl>
  <div class="expand"><svg width="13" height="9" viewBox="0 0 13 9"><path d="M.5 1h12L6.500 7.500z" fill="url(#gArrow)" stroke="#3f78d8"/></svg></div>
</footer>
</body>
</html>
```
FILE: styles.css
```css
* { box-sizing: border-box; }
body { margin: 0; width: 1000px; height: 686px; overflow: hidden; background: #f0f0f0; font: 12px/16px "Open Sans", "Noto Sans", sans-serif; color: #000; display: flex; flex-direction: column; }
.defs { display: block; width: 0; height: 0; flex: none; }
i, b { font-style: normal; font-weight: normal; display: block; flex: none; }
span { white-space: nowrap; }

.titlebar { height: 28px; flex: none; background: #fff; display: flex; align-items: flex-start; padding: 4px 0 0 2px; }
.logo { width: 15px; height: 16px; background: #20212b; color: #fff; font: bold 7.5px/15px "DejaVu Sans", sans-serif; text-align: center; overflow: hidden; }
.title { color: #959595; margin-left: 5px; line-height: 18px; width: 349px; letter-spacing: -.27px; }
.winbtns { margin-left: auto; margin-top: -2px; margin-right: 10px; }

.menubar { height: 24px; flex: none; display: flex; align-items: center; padding-left: 8px; }
.menubar > span { letter-spacing: -.25px; }
.m1 { width: 37px; } .m2 { width: 39px; } .m3 { width: 44px; } .m4 { width: 50px; }
.m5 { width: 58px; } .m6 { width: 59px; } .m7 { width: 46px; } .m8 { width: 37px; }
.strip { display: flex; align-items: center; gap: 7px; height: 22px; width: 81px; margin-top: -1px; padding-left: 3px; border-right: 1px solid #bbb; background: #f5f5f5; }
.strip svg { width: 16px; height: 16px; flex: none; }
.strip svg:nth-of-type(1) { margin-left: 1px; }
.grip { width: 2px; height: 14px; background: repeating-linear-gradient(#b4b4b4 0 2px, transparent 2px 4px); }

.toolbar { height: 25px; flex: none; display: flex; align-items: flex-start; padding-top: 1px; background: linear-gradient(#fcfcfc, #f1f1f1); margin-left: -2px; }
.toolbar b { width: 23px; height: 22px; display: flex; align-items: center; justify-content: center; }
.toolbar b svg { width: 16px; height: 16px; flex: none; }
b.on { border: 1px solid #0078d7; background: #f9fbfd; }
.sep { width: 18px; height: 16px; margin-top: 4px; background: linear-gradient(90deg, transparent 9px, #bdbdbd 9px 10px, #fff 10px 11px, transparent 11px); }
.combo { display: flex; flex: none; height: 22px; align-items: center; justify-content: space-between; padding: 0 4px 0 7px; letter-spacing: -.05px; }
.c1 { width: 122px; } .c2 { width: 121px; padding-left: 6px; padding-right: 3px; }
.caret { border: 3px solid transparent; border-top-color: #000; border-bottom: 0; }
.more { margin-left: 16px; width: 8px; height: 24px; padding-top: 14px; background: linear-gradient(#f4f4f4, #aaa); }

.work { height: 513px; flex: none; display: flex; }
.tools { width: 22px; display: flex; flex-direction: column; background: linear-gradient(90deg, #fcfcfc, #f1f1f1); overflow: hidden; }
.hgrip { height: 9px; width: 14px; background: repeating-linear-gradient(90deg, #bbb 0 2px, transparent 2px 4px) 0 3px / 14px 2px no-repeat; }
.tools b { width: 23px; height: 24px; margin-left: -3px; display: flex; align-items: center; padding-left: 2px; flex: none; }
.tools b.on { padding-left: 1px; }
.tools b svg { width: 16px; height: 16px; }
.hsep { height: 12px; width: 18px; background: linear-gradient(transparent 6px, #bdbdbd 6px 7px, #fff 7px 8px, transparent 8px); }
.tmore { height: 11px; margin-top: 15px; padding: 1px 0 0 10px; background: linear-gradient(90deg, #f5f5f5 40%, #aaa); }
.tmore svg, .more svg, .collapse svg, .expand svg { display: block; }

.map { width: 681px; height: 513px; flex: none; background: #000; border-left: 2px solid #8a8a8a; border-top: 1px solid #8a8a8a; }
.map path, .map circle { stroke-linejoin: round; }
.grid { fill: none; stroke: #666; stroke-dasharray: 1 1; shape-rendering: crispEdges; }
.over { stroke: #6b6b69; }
.rock { fill: #523327; stroke: #fff; stroke-width: 1.9; }
.steel { fill: #3e4c4d; stroke: #e8f3f3; stroke-width: 1.6; }
.slab { fill: #4a4a4a; stroke: #fff; stroke-width: 1.9; }
.shade { fill: #2c1c17; }
.seams { fill: url(#seams); }
.grain { fill: url(#dots); }
.wall { fill: none; stroke: #9d9a96; stroke-width: 1.35; }
.faint { fill: none; stroke: #92908c; stroke-width: .6; }
.tick { fill: none; stroke: #fff; stroke-width: 1.3; }
.vtx { fill: none; stroke: #a3eeee; stroke-width: 1.4; stroke-dasharray: 1.4 2.4; }
.green { fill: none; stroke: #5a9b55; }
.pale { fill: none; stroke: #b7d7ae; stroke-width: 1.5; }
.ring circle { fill: none; stroke: #a9b7b7; stroke-width: 2.2; stroke-dasharray: 2 1; }
.box { fill: #3e4c4d; stroke: #fff; }
.red { fill: none; stroke: #f20d0d; stroke-width: 1.8; }

.side { flex: 1; min-width: 0; padding: 1px 0 0 5px; display: flex; flex-direction: column; overflow: hidden; }
.collapse { height: 14px; border: 1px solid #a0a0a0; border-right: 0; padding: 2px 0 0 137px; flex: none; }
.dock { display: flex; padding: 7px 0 0 1px; }
.list { width: 240px; height: 489px; flex: none; background: #fff; border: 1px solid #828790; padding: 1px 0 0 5px; }
.row { width: 213px; height: 17px; background: #0078d7; color: #fff; font: 11px/17px "Noto Sans", sans-serif; letter-spacing: -.4px; padding-left: 1px; }
.tabs { display: flex; flex-direction: column; flex: none; margin-top: -1px; }
.t1 { width: 29px; margin-left: 1px; }
.t2 { width: 29px; }
.tab { background: #f3f3f3; border: 1px solid #e2e2e2; border-right: 0; margin-left: 2px; display: flex; align-items: center; justify-content: center; flex: none; }
.tab span { writing-mode: vertical-rl; transform: rotate(180deg); font: bold 12px/16px "Liberation Sans", Arial, sans-serif; letter-spacing: -.25px; }
.undo { height: 105px; margin: 0 0 2px; padding-bottom: 4px; background: #f9f9f9; }
.scripts { height: 68px; margin-bottom: 2px; padding-bottom: 2px; }
.draw { height: 116px; margin-bottom: 2px; padding-bottom: 3px; }
.comments { height: 94px; padding-bottom: 3px; }
.tag { height: 108px; margin: 0 0 2px; padding-bottom: 2px; padding-right: 2px; }
.help { height: 60px; margin-left: 0; padding-bottom: 3px; padding-right: 2px; }

.status { flex: 1; display: flex; border-top: 1px solid #fff; background: #efefef; overflow: hidden; }
h1 { margin: 23px 0 0 16px; width: 400px; font: bold 48px/60px "DejaVu Sans", sans-serif; color: #6d6d6d; white-space: nowrap; letter-spacing: -.45px; }
.stats { margin: 9px 0 0 auto; display: grid; grid-template-columns: 40px 61px; column-gap: 9px; grid-auto-rows: 18px; font: bold 12px/18px "Liberation Sans", Arial, sans-serif; color: #737373; align-content: start; }
.stats dt { text-align: right; }
.stats dd { margin: 0; letter-spacing: -.1px; }
.expand { width: 19px; height: 19px; margin-top: 2px; border: 1px solid #a0a0a0; border-right: 0; padding: 5px 0 0 4px; overflow: hidden; flex: none; }
```
